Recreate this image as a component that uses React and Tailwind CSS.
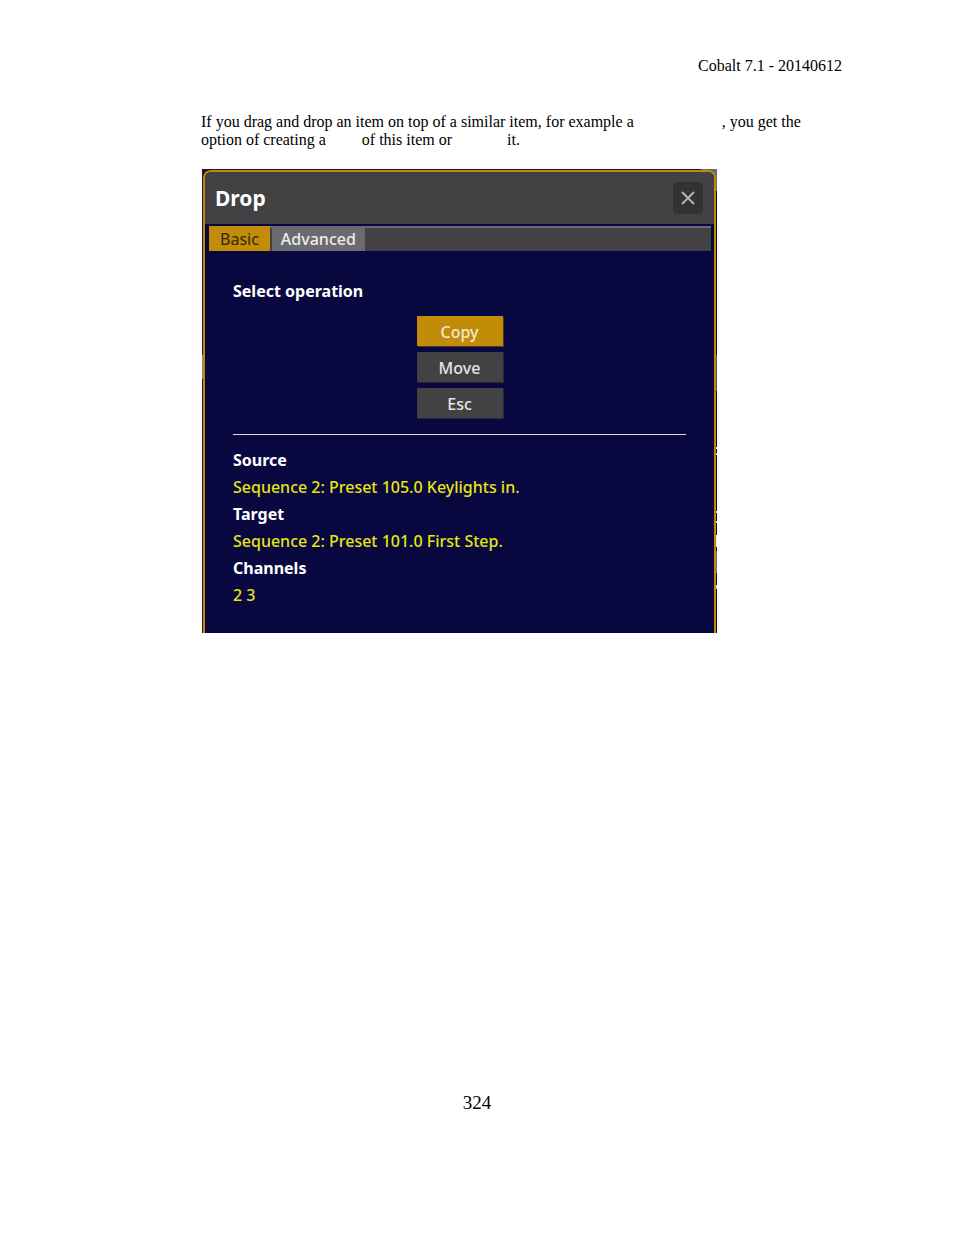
import React, { useState } from 'react';

const TABS = ['Basic', 'Advanced'];
const OPERATIONS = ['Copy', 'Move', 'Esc'];
const DETAILS = [
	{ label: 'Source', value: 'Sequence 2: Preset 105.0 Keylights in.' },
	{ label: 'Target', value: 'Sequence 2: Preset 101.0 First Step.' },
	{ label: 'Channels', value: '2 3' },
];

// Slivers of the console screen that show at the edges of the dialog
const Backdrop = () => (
	<div aria-hidden="true" className="col-start-1 row-start-1 flex justify-between bg-[#1b1a26]">
		<div className="flex w-4 flex-col pt-[186px]">
			<div className="h-6 bg-[#8a8a8c]"></div>
		</div>
		<div className="flex w-4 flex-col bg-[#0c0c0c]">
			<div className="h-[22px] bg-[#6b6a72]"></div>
			<div className="mt-[164px] h-9 bg-[#55554f]"></div>
			<div className="mt-14 h-[2px] bg-[#dddddd]"></div>
			<div className="mt-1 h-[2px] bg-[#dddddd]"></div>
			<div className="mt-14 h-[2px] bg-[#dddddd]"></div>
			<div className="mt-2 h-[2px] bg-[#dddddd]"></div>
			<div className="mt-3 h-3 bg-[#eeeeee]"></div>
			<div className="mt-1 h-[22px] bg-[#77776f]"></div>
			<div className="mt-3 h-1 bg-[#dddddd]"></div>
		</div>
	</div>
);

const DropDialog = () => {
	const [tab, setTab] = useState('Basic');
	const [operation, setOperation] = useState('Copy');

	return (
		<section
			aria-label="Drop"
			className="col-start-1 row-start-1 mx-px mt-px flex flex-col overflow-hidden rounded-t-lg border-2 border-b-0 border-[#c08808] bg-[#090740] font-['Noto_Sans',sans-serif]"
		>
			<header className="flex h-[52px] items-center justify-between bg-[#424143] pr-[11px] pl-[10px]">
				<h1 className="text-[21px] font-bold text-white">Drop</h1>
				<button
					type="button"
					aria-label="Close"
					className="flex h-8 w-[30px] items-center justify-center rounded bg-[#323335]"
				>
					<svg viewBox="0 0 14 14" className="h-[14px] w-[14px]" stroke="#b4b4b6" strokeWidth="2" fill="none">
						<path d="M1 1l12 12M13 1L1 13" />
					</svg>
				</button>
			</header>

			<div className="pt-[2px] pr-[3px] pl-1">
				<div role="tablist" className="flex h-[25px] gap-[2px] bg-[#424143] shadow-[inset_0_2px_0_#6d6c72]">
					{TABS.map((name) => (
						<button
							key={name}
							type="button"
							role="tab"
							aria-selected={tab === name}
							onClick={() => setTab(name)}
							className={
								tab === name
									? 'bg-[#c28b08] px-[11px] pt-[2px] text-base leading-[23px] text-[#33270c]'
									: 'bg-[#6b6a6e] px-[9px] pt-[2px] text-base leading-[23px] font-medium text-[#ececec]'
							}
						>
							{name}
						</button>
					))}
				</div>
			</div>

			<div className="px-7 pt-[27px] pb-6 text-base leading-[27px]">
				<h2 className="font-bold text-white">Select operation</h2>
				<div className="mt-[11px] flex flex-col items-center gap-[6px]">
					{OPERATIONS.map((name) => (
						<button
							key={name}
							type="button"
							onClick={() => setOperation(name)}
							className={
								operation === name
									? 'h-[30px] w-[86px] bg-[#c28b08] pt-[2px] leading-7 font-medium text-[#f0e8d0] shadow-[1px_1px_0_#4c3a20]'
									: 'h-[30px] w-[86px] bg-[#424143] pt-[2px] leading-7 font-medium text-[#e6e6e6] shadow-[1px_1px_0_#2a2930]'
							}
						>
							{name}
						</button>
					))}
				</div>
				<hr className="mt-4 mb-3 border-t-[1px] border-[#dcdce4]" />
				<dl>
					{DETAILS.map(({ label, value }) => (
						<div key={label}>
							<dt className="font-bold text-white">{label}</dt>
							<dd className="font-medium text-[#e6e612]">{value}</dd>
						</div>
					))}
				</dl>
			</div>
		</section>
	);
};

const App = () => {
	return (
		<div className="flex min-h-screen flex-col bg-white pt-[57px] pr-28 pb-[120px] pl-[201px] font-['Liberation_Serif',serif] text-base leading-[18px] text-black">
			<p className="text-right">Cobalt 7.1 - 20140612</p>
			<main className="mt-[38px] grow">
				<p>
					If you drag and drop an item on top of a similar item, for example a
					<span className="inline-block w-[88px]"></span>, you get the
					<br />
					option of creating a
					<span className="inline-block w-9"></span>
					of this item or
					<span className="inline-block w-[55px]"></span>
					it.
				</p>
				<figure className="mt-5 ml-px grid max-w-[515px]">
					<Backdrop />
					<DropDialog />
				</figure>
			</main>
			<footer className="-ml-[89px] text-center text-[19px] leading-6">324</footer>
		</div>
	);
};

export default App;
